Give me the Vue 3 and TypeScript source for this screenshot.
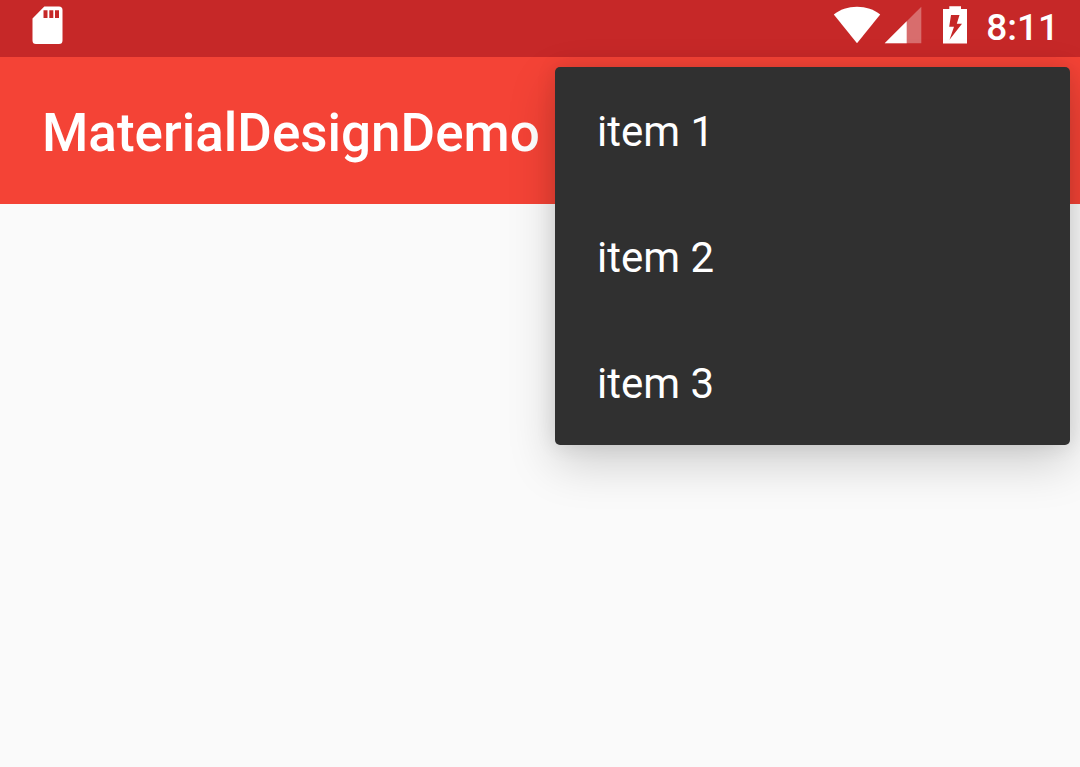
<script setup lang="ts">
import { ref } from 'vue'

interface MenuItem {
  id: number
  label: string
}

const title = 'MaterialDesignDemo'
const time = '8:11'
const items: MenuItem[] = [
  { id: 1, label: 'item 1' },
  { id: 2, label: 'item 2' },
  { id: 3, label: 'item 3' },
]
const selected = ref<number | null>(null)
</script>

<template>
  <div class="screen">
    <div class="status-bar">
      <svg class="icon" width="32" height="38" viewBox="0 0 32 38" role="img" aria-label="SD card">
        <path
          fill="#fff"
          fill-rule="evenodd"
          d="M12.3.5H27a3.500 3.500 0 0 1 3.500 3.500V34.500a3.500 3.500 0 0 1-3.500 3.500H4a3.500 3.500 0 0 1-3.500-3.500V12.500ZM11.500 4.300v7.700h4V4.300ZM17.300 4.300v7.700h4V4.300ZM23 4.300v7.700h4V4.300Z"
        />
      </svg>
      <div class="indicators">
        <svg class="icon" width="48" height="38" viewBox="0 0 48 38" role="img" aria-label="Wi-Fi">
          <path fill="#fff" d="M24 37.300.8 8.400C7 3.600 15 .8 24 .8s17 2.800 23.200 7.600Z" />
        </svg>
        <svg class="icon signal" width="38" height="38" viewBox="0 0 38 38" role="img" aria-label="Mobile signal">
          <path fill="#fff" fill-opacity=".32" d="M37.300.7V37.300H.7Z" />
          <path fill="#fff" d="M22.700 15.300V37.300H.7Z" />
        </svg>
        <svg class="icon battery" width="24" height="38" viewBox="0 0 24 38" role="img" aria-label="Battery charging">
          <path
            fill="#fff"
            fill-rule="evenodd"
            d="M6.300.3H18V3H24V37.600H0V3H6.300ZM8 9 6.200 20.800H11L6.500 33.800 19 17.800H13.800L16.500 9Z"
          />
        </svg>
        <span class="clock">{{ time }}</span>
      </div>
    </div>
    <header class="app-bar">
      <h1 class="title">{{ title }}</h1>
    </header>
    <div class="menu" role="menu" aria-label="More options">
      <button
        v-for="item in items"
        :key="item.id"
        class="menu-item"
        type="button"
        role="menuitem"
        @click="selected = item.id"
      >
        {{ item.label }}
      </button>
    </div>
  </div>
</template>

<style>
body {
  margin: 0;
  background: #fafafa;
}
</style>

<style scoped>
.screen {
  position: relative;
  min-height: 100vh;
  overflow: hidden;
  background: #fafafa;
  font-family: Roboto, 'Liberation Sans', sans-serif;
  color: #fff;
}

.status-bar {
  box-sizing: border-box;
  display: flex;
  align-items: flex-start;
  justify-content: space-between;
  height: 57px;
  padding: 6px 21px 0 32px;
  background: #c62828;
}

.indicators {
  display: flex;
  align-items: flex-start;
}

.icon {
  display: block;
  flex: none;
}

.signal {
  margin-left: 3px;
}

.battery {
  margin-left: 21px;
}

.clock {
  margin-left: 19px;
  font-size: 37px;
  font-weight: 500;
  line-height: 44px;
}

.app-bar {
  box-sizing: border-box;
  display: flex;
  align-items: center;
  height: 147px;
  padding: 4px 42px 0;
  background: #f44336;
}

.title {
  margin: 0;
  font-size: 53px;
  font-weight: 500;
  line-height: 62px;
}

.menu {
  position: absolute;
  top: 67px;
  right: 10px;
  width: 515px;
  border-radius: 5px;
  background: #303030;
  box-shadow:
    0 18px 48px rgba(0, 0, 0, 0.18),
    0 0 20px rgba(0, 0, 0, 0.1);
}

.menu-item {
  display: block;
  width: 100%;
  height: 126px;
  margin: 0;
  padding: 4px 42px 0;
  border: 0;
  background: transparent;
  color: inherit;
  font: inherit;
  font-size: 42px;
  line-height: 50px;
  text-align: left;
  cursor: pointer;
}
</style>
